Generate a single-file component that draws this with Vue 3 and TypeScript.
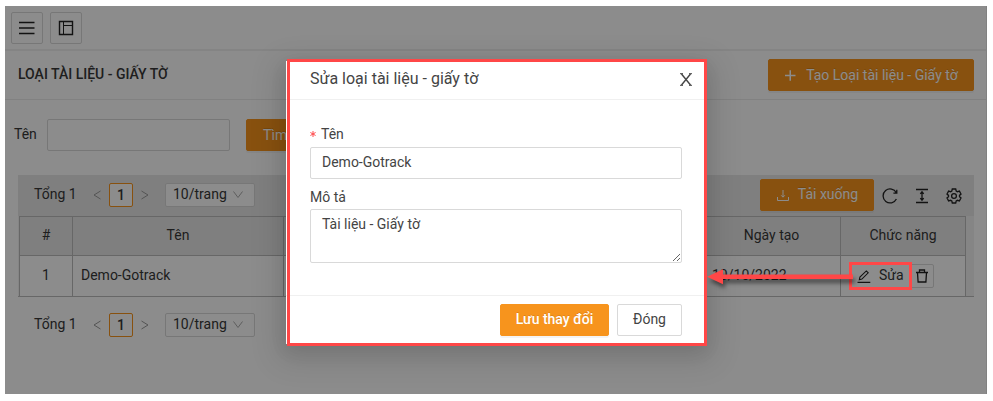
<script setup lang="ts">
import { ref } from 'vue'

const name = ref('Demo-Gotrack')
const description = ref('Tài liệu - Giấy tờ')
</script>

<template>
  <div class="page">
    <div class="app">
      <div class="topbar">
        <button class="square">
          <svg width="16" height="16" viewBox="0 0 16 16"><path d="M0 2.500h15.500M0 8h15.500M0 13.500h15.500" stroke="#222" stroke-width="1.300" fill="none" /></svg>
        </button>
        <button class="square">
          <svg width="16" height="16" viewBox="0 0 16 16" fill="none" stroke="#222"><path d="M1.500 1.500h13v13h-13z" stroke-width="1.400" /><path d="M5.500 2v12M5.500 5.500h9" /></svg>
        </button>
      </div>
      <div class="heading">
        <h1>LOẠI TÀI LIỆU - GIẤY TỜ</h1>
        <button class="primary create">
          <svg width="12" height="12" viewBox="0 0 12 12"><path d="M1 6.500h10.500M6.250 1.200v10.600" stroke="#fff" stroke-width="1.500" /></svg>
          <span>Tạo Loại tài liệu - Giấy tờ</span>
        </button>
      </div>
      <div class="search">
        <label>Tên</label>
        <input class="field" />
        <button class="primary find">Tìm kiếm</button>
      </div>
      <div class="grid">
        <div class="tools">
          <div class="pager">
            <span class="total">Tổng 1</span>
            <svg class="arrow" width="8" height="12" viewBox="0 0 8 12"><path d="M7.500 2 1 6l6.500 4" /></svg>
            <b>1</b>
            <svg class="arrow" width="8" height="12" viewBox="0 0 8 12"><path d="M.5 2 7 6 .5 10" /></svg>
            <span class="select"><span>10/trang</span><svg width="12" height="8" viewBox="0 0 12 8"><path d="m1.500.5 4.500 6 4.500-6" /></svg></span>
          </div>
          <div class="actions">
            <button class="primary download">
              <svg width="14" height="14" viewBox="0 0 14 14" fill="none" stroke="#fff"><path d="M1.500 9v3.500h11V9M7 2v7M5.200 7.300 7 9.200l1.800-1.900" /></svg>
              <span>Tải xuống</span>
            </button>
            <svg class="tool" width="16" height="16" viewBox="0 0 16 16"><path d="M14.300 4.700A7 7 0 1 0 14.400 11M14.800 1.800v3.300h-3.400" /></svg>
            <svg class="tool" width="16" height="16" viewBox="0 0 16 16"><path d="M2 1.500h12M2 14.500h12M8 4v8M6.300 5.800 8 3.800l1.700 2M6.300 10.200 8 12.200l1.700-2" /></svg>
            <svg class="tool" width="16" height="16" viewBox="0 0 16 16"><path d="M6.300 1h3.400l.5 2 1.200.7 2-.6L15 6l-1.500 1.400v1.300L15 10l-1.600 2.900-2-.6-1.200.7-.5 2H6.300l-.5-2-1.200-.7-2 .6L1 10l1.500-1.300V7.400L1 6l1.600-2.900 2 .6L5.800 3z" /><circle cx="8" cy="8" r="2.400" /></svg>
          </div>
        </div>
        <div class="tablewrap">
          <table>
            <colgroup><col class="c1" /><col class="c2" /><col class="c3" /><col class="c4" /><col class="c5" /></colgroup>
            <thead>
              <tr><th>#</th><th>Tên</th><th>Mô tả</th><th>Ngày tạo</th><th>Chức năng</th></tr>
            </thead>
            <tbody>
              <tr>
                <td class="center">1</td>
                <td>Demo-Gotrack</td>
                <td></td>
                <td class="date">10/10/2022</td>
                <td class="ops">
                  <div class="oprow">
                    <span class="edit">
                      <svg width="14" height="14" viewBox="0 0 14 14" fill="none" stroke="#222" stroke-width="1.100"><path d="M.5 13.400h12.800M2.300 10.800l.6-2.700L9.300 1.900l1.900 1.900-6.300 6.300z" /></svg>
                      <span>Sửa</span>
                    </span>
                    <span class="trash">
                      <svg width="14" height="14" viewBox="0 0 14 14" fill="none" stroke="#222" stroke-width="1.300"><path d="M1 3.500h12M4.500 3.500V1h5v2.500M2.500 3.500l.6 9.500h7.800l.6-9.500" /></svg>
                    </span>
                  </div>
                </td>
              </tr>
            </tbody>
          </table>
        </div>
        <div class="pager bottom">
          <span class="total">Tổng 1</span>
          <svg class="arrow" width="8" height="12" viewBox="0 0 8 12"><path d="M7.500 2 1 6l6.500 4" /></svg>
          <b>1</b>
          <svg class="arrow" width="8" height="12" viewBox="0 0 8 12"><path d="M.5 2 7 6 .5 10" /></svg>
          <span class="select"><span>10/trang</span><svg width="12" height="8" viewBox="0 0 12 8"><path d="m1.500.5 4.500 6 4.500-6" /></svg></span>
        </div>
      </div>
      <div class="mask">
        <div class="modal">
          <header>
            <span>Sửa loại tài liệu - giấy tờ</span>
            <svg width="12" height="13" viewBox="0 0 12 13" fill="none" stroke="#444" stroke-width="1.400"><path d="m1.500 1 9 11M10.500 1l-9 11" /><path d="M0 .7h3M9 .7h3M0 12.300h3M9 12.300h3" stroke-width="1" /></svg>
          </header>
          <div class="body">
            <label class="required">
              <svg width="6" height="6" viewBox="0 0 6 6"><path d="M3 0v6M.4 1.500l5.200 3M5.600 1.500l-5.200 3" stroke="#ff4d4f" /></svg>
              <span>Tên</span>
            </label>
            <input v-model="name" class="field" />
            <label class="second">Mô tả</label>
            <textarea v-model="description" class="field"></textarea>
          </div>
          <footer>
            <button class="primary save">Lưu thay đổi</button>
            <button class="close">Đóng</button>
          </footer>
        </div>
      </div>
    </div>
    <div class="outline modal-outline"></div>
    <div class="outline edit-outline"></div>
    <svg class="pointer" width="150" height="30" viewBox="0 0 150 30"><path d="M1 12.700 17 5.200v5.300h130v4.500H17v5.200z" fill="#ff4747" /></svg>
  </div>
</template>

<style>
body { background: #fff; }
</style>

<style scoped>
* { box-sizing: border-box; }
.page { position: relative; width: 993px; height: 401px; padding: 6px 0 0 5px; overflow: hidden; font: 14px/22px Roboto, sans-serif; color: #383838; }
.app { position: relative; width: 982px; height: 388px; background: #fff; border-right: 1px solid #ececec; }
button { font: inherit; border: 1px solid #d9d9d9; border-radius: 2px; background: #fff; padding: 0 0 1px; height: 32px; display: flex; align-items: center; justify-content: center; color: #444; }
.primary { background: #f7941d; border-color: #f7941d; color: #fff; text-shadow: 0 -1px 0 rgba(0, 0, 0, .12); box-shadow: 0 2px 0 rgba(0, 0, 0, .045); }
.topbar { height: 45px; padding: 6px; display: flex; gap: 7px; border-bottom: 2px solid #f0f0f0; }
.square { width: 32px; padding: 0; }
.heading { height: 49px; display: flex; align-items: center; justify-content: space-between; padding: 0 12px 0 13px; border-bottom: 1px solid #ececec; }
h1 { margin: 0; padding-bottom: 2px; font-size: 14px; font-weight: 500; }
.create { width: 206px; gap: 10px; }
.search { height: 75px; padding: 19px 0 0 9px; display: flex; }
.search label { width: 33px; line-height: 30px; }
.field { display: block; border: 1px solid #d9d9d9; border-radius: 2px; background: #fff; font: inherit; color: #444; outline: none; padding: 3px 11px 5px; }
.search .field { width: 183px; height: 32px; }
.find { width: 92px; margin-left: 16px; }
.grid { margin: 0 12px 0 13px; }
.tools { height: 41px; background: #e8e8e8; display: flex; justify-content: space-between; }
.pager { display: flex; align-items: center; padding-left: 16px; height: 40px; }
.total { width: 59px; padding-bottom: 2px; }
.arrow { fill: none; stroke: #999; stroke-width: 1; }
.pager b { width: 24px; height: 24px; margin: 0 8px; border: 1px solid #f7941d; border-radius: 2px; background: #fff; font-weight: 500; line-height: 23px; text-align: center; }
.select { width: 90px; height: 24px; margin-left: 16px; padding: 0 10px 0 7px; display: flex; align-items: center; justify-content: space-between; border: 1px solid #d9d9d9; border-radius: 2px; background: #fff; }
.select span { padding-bottom: 2px; }
.select svg { fill: none; stroke: #aaa; }
.actions { display: flex; align-items: center; padding-right: 12px; gap: 16px; }
.download { width: 114px; gap: 8px; margin: 0 -8px 1px 0; }
.download span { padding-bottom: 1px; }
.tool { fill: none; stroke: #222; stroke-width: 1.300; }
.tablewrap { height: 81px; padding-left: 1px; background: linear-gradient(#f3f3f3 80px, #bcbcbc 80px); }
table { width: 947px; border-collapse: collapse; table-layout: fixed; background: #fff; }
.c1 { width: 53px; } .c2 { width: 211px; } .c3 { width: 419px; } .c4 { width: 138px; }
th, td { border: 1px solid #bcbcbc; padding: 0 8px 2px; font-weight: 400; }
th { height: 39px; background: #e8e8e8; }
td { height: 41px; }
.date { padding-left: 9px; }
.ops { padding-bottom: 0; }
.center { text-align: center; }
.oprow { display: flex; align-items: center; gap: 5px; padding-left: 8px; }
.edit { display: flex; align-items: center; gap: 8px; width: 48px; }
.edit span { padding-bottom: 2px; }
.trash { width: 24px; height: 24px; border: 1px solid #d9d9d9; border-radius: 2px; display: flex; align-items: center; justify-content: center; }
.bottom { margin-top: 8px; }
.mask { position: absolute; inset: 0 -1px 0 0; background: rgba(0, 0, 0, .45); }
.modal { position: absolute; left: 281px; top: 55px; width: 420px; height: 283px; background: #fff; box-shadow: 0 6px 16px rgba(0, 0, 0, .08), 0 9px 28px 8px rgba(0, 0, 0, .12); }
header { height: 39px; padding: 0 14px 2px 24px; display: flex; align-items: center; justify-content: space-between; border-bottom: 1px solid #f0f0f0; font-size: 16px; color: #444; }
.body { height: 196px; padding: 23px 24px 0; color: #444; border-bottom: 1px solid #f0f0f0; }
.body label { display: block; height: 24px; }
.body .required { display: flex; align-items: center; gap: 5px; padding-bottom: 2px; }
.body .field { width: 372px; height: 32px; }
.body .second { margin-top: 7px; height: 23px; }
.body textarea.field { height: 54px; resize: vertical; }
footer { display: flex; gap: 8px; justify-content: flex-end; padding: 8px 24px; }
footer button { padding-bottom: 2px; }
.save { width: 109px; font-weight: 500; }
.close { width: 65px; }
.outline { position: absolute; border: 3px solid #ff4747; }
.modal-outline { left: 287px; top: 59px; width: 420px; height: 287px; }
.edit-outline { left: 849px; top: 262px; width: 63px; height: 28px; }
.pointer { position: absolute; left: 706px; top: 264px; filter: drop-shadow(2px 4px 2px rgba(0, 0, 0, .5)); }
</style>
